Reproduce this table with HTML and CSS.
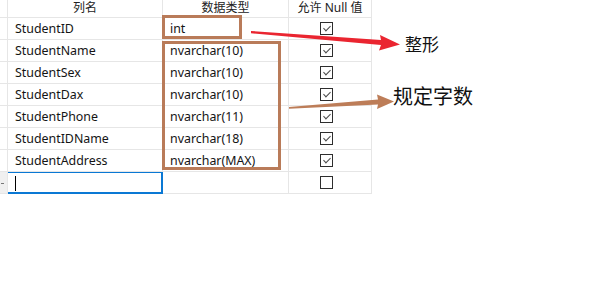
FILE: index.html
```html
<!DOCTYPE html>
<html lang="zh">
<head>
<meta charset="utf-8">
<title>表设计</title>
<link rel="stylesheet" href="styles.css">
</head>
<body>
<div class="page">
  <div class="grid">
    <div class="gut head"></div>
    <div class="hcell">列名</div>
    <div class="hcell">数据类型</div>
    <div class="hcell">允许 Null 值</div>

    <div class="gut"></div><div class="cell">StudentID</div><div class="cell type">int</div><div class="cell chk"><span class="box on"></span></div>
    <div class="gut"></div><div class="cell">StudentName</div><div class="cell type">nvarchar(10)</div><div class="cell chk"><span class="box on"></span></div>
    <div class="gut"></div><div class="cell">StudentSex</div><div class="cell type">nvarchar(10)</div><div class="cell chk"><span class="box on"></span></div>
    <div class="gut"></div><div class="cell">StudentDax</div><div class="cell type">nvarchar(10)</div><div class="cell chk"><span class="box on"></span></div>
    <div class="gut"></div><div class="cell">StudentPhone</div><div class="cell type">nvarchar(11)</div><div class="cell chk"><span class="box on"></span></div>
    <div class="gut"></div><div class="cell">StudentIDName</div><div class="cell type">nvarchar(18)</div><div class="cell chk"><span class="box on"></span></div>
    <div class="gut"></div><div class="cell">StudentAddress</div><div class="cell type">nvarchar(MAX)</div><div class="cell chk"><span class="box on"></span></div>
    <div class="gut cur"></div><div class="cell sel"><span class="caret"></span></div><div class="cell type"></div><div class="cell chk"><span class="box"></span></div>
  </div>

  <svg class="notes" width="597" height="294" viewBox="0 0 597 294">
    <rect x="163.5" y="16.5" width="77" height="21" fill="none" stroke="#b97b59" stroke-width="3"/>
    <rect x="163.5" y="42.5" width="116" height="126" fill="none" stroke="#b97b59" stroke-width="3"/>
    <polygon points="251,31 381,40 380,35 400,44.5 379,50.5 381,45 251,33.2" fill="#ea2530"/>
    <polygon points="289,107 378,99.5 377,94.5 394,101.5 377,109 378,104.5 289,108.8" fill="#bd7d58"/>
  </svg>
  <span class="label l1">整形</span>
  <span class="label l2">规定字数</span>
</div>
</body>
</html>
```

FILE: styles.css
```css
html, body {
  margin: 0;
  padding: 0;
  background: #ffffff;
}
.page {
  position: relative;
  width: 597px;
  height: 294px;
  overflow: hidden;
  font-family: "Noto Sans", "Noto Sans CJK SC", sans-serif;
  font-size: 12.4px;
  color: #141414;
}
.grid {
  display: grid;
  grid-template-columns: 8px 155px 126px 83px;
  grid-template-rows: 18px repeat(8, 22px);
  width: 372px;
}
.gut {
  border-right: 1px solid #e6e6e6;
  border-bottom: 1px solid #e6e6e6;
}
.gut.cur {
  background: #f0f0f0;
  position: relative;
}
.gut.cur::after {
  content: "";
  position: absolute;
  left: 1px;
  top: 11px;
  width: 3px;
  height: 1px;
  background: #777;
}
.hcell {
  display: flex;
  align-items: center;
  justify-content: center;
  border-right: 1px solid #e6e6e6;
  border-bottom: 1px solid #e6e6e6;
  color: #222;
  font-size: 12px;
  line-height: 1;
  padding-bottom: 1px;
}
.cell {
  display: flex;
  align-items: center;
  padding-left: 7px;
  padding-top: 1px;
  border-right: 1px solid #e6e6e6;
  border-bottom: 1px solid #e6e6e6;
  line-height: 1;
  white-space: nowrap;
}
.cell.chk {
  padding-left: 0;
  padding-top: 0;
  justify-content: center;
  padding-right: 7px;
}
.cell.sel {
  box-shadow: inset 0 0 0 1px #0a78d4;
  border-right-color: #0a78d4;
  border-bottom-color: #0a78d4;
  margin-left: -1px;
  padding-left: 8px;
  padding-top: 0;
}
.caret {
  display: block;
  width: 1px;
  height: 15px;
  background: #000;
  margin-top: 1px;
}
.box {
  display: block;
  width: 11px;
  height: 11px;
  border: 1px solid #2e2e2e;
  background: #fff;
  position: relative;
}
.box.on::after {
  content: "";
  position: absolute;
  top: 1px;
  left: 4px;
  width: 3px;
  height: 6px;
  border-right: 1.3px solid #4a4a4a;
  border-bottom: 1.3px solid #4a4a4a;
  transform: rotate(45deg);
  transform-origin: center;
}
.notes {
  position: absolute;
  left: 0;
  top: 0;
  pointer-events: none;
}
.label {
  position: absolute;
  font-family: "Noto Sans CJK SC", sans-serif;
  color: #111;
  line-height: 1;
  white-space: nowrap;
}
.l1 {
  left: 405px;
  top: 35px;
  font-size: 17px;
}
.l2 {
  left: 393px;
  top: 86px;
  font-size: 20px;
}
```
